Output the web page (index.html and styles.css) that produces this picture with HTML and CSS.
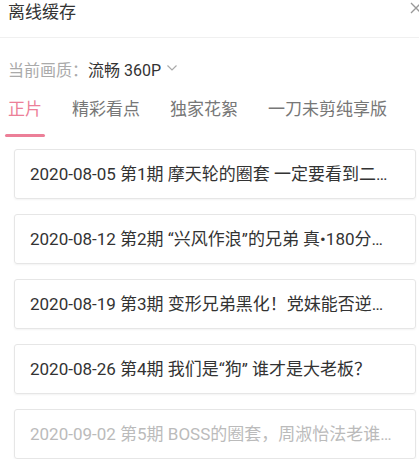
FILE: index.html
```html
<!DOCTYPE html>
<html>
<head>
  <title>离线缓存</title>
  <link rel="stylesheet" href="styles.css">
</head>
<body>
  <div class="panel">
    <div class="header">
      <h2 class="title">离线缓存</h2>
      <svg class="close" width="12" height="12" viewBox="0 0 12 12">
        <path d="M1 1 L11 11 M11 1 L1 11" stroke="#999" stroke-width="1.3" fill="none"/>
      </svg>
    </div>

    <div class="quality">
      <span class="label">当前画质：</span>
      <span class="value">流畅 360P</span>
      <svg class="chevron" width="10" height="6" viewBox="0 0 10 6">
        <path d="M0.5 0.5 L5 5 L9.5 0.5" stroke="#aaa" stroke-width="1.2" fill="none"/>
      </svg>
    </div>

    <div class="tabs">
      <div class="tab active">正片</div>
      <div class="tab">精彩看点</div>
      <div class="tab">独家花絮</div>
      <div class="tab">一刀未剪纯享版</div>
    </div>

    <div class="list">
      <div class="item">2020-08-05 第1期 摩天轮的圈套 一定要看到二十分钟之后</div>
      <div class="item">2020-08-12 第2期 “兴风作浪”的兄弟 真•180分钟完整版</div>
      <div class="item">2020-08-19 第3期 变形兄弟黑化！党妹能否逆袭成功</div>
      <div class="item">2020-08-26 第4期 我们是“狗” 谁才是大老板？</div>
      <div class="item disabled">2020-09-02 第5期 BOSS的圈套，周淑怡法老谁能赢到最后</div>
    </div>
  </div>
</body>
</html>
```

FILE: styles.css
```css
body { margin: 0; background: #fff; font-family: Roboto, "Noto Sans CJK SC", sans-serif; color: #333; overflow: hidden; }
.panel { width: 419px; }

.header { display: flex; justify-content: space-between; align-items: flex-start; height: 37px; border-bottom: 1px solid #f0f0f0; padding-left: 8px; }
.title { margin: 0; font-size: 17px; font-weight: normal; line-height: 24px; color: #333; }
.close { margin-top: 2px; margin-right: -3px; }

.quality { display: flex; align-items: center; height: 22px; margin-top: 20px; padding-left: 8px; font-size: 16px; }
.label { color: #aaa; }
.value { color: #333; }
.chevron { margin-left: 6px; margin-top: -2px; }

.tabs { display: flex; gap: 30px; margin-top: 17px; padding-left: 8px; }
.tab { position: relative; font-size: 17px; line-height: 24px; color: #777; padding-bottom: 16px; }
.tab.active { color: #ec7f98; }
.tab.active::after { content: ""; position: absolute; left: -3px; right: -3px; bottom: 0; height: 3px; background: #ec7f98; border-radius: 2px; }

.list { display: flex; flex-direction: column; gap: 15px; margin-top: 12px; padding-left: 14px; }
.item { width: 402px; height: 50px; box-sizing: border-box; border: 1px solid #e6e6e6; border-radius: 3px; box-shadow: 0 1px 2px rgba(0,0,0,0.05); padding: 0 20px 0 15px; font-size: 17px; line-height: 48px; white-space: nowrap; overflow: hidden; text-overflow: ellipsis; color: #333; }
.item.disabled { color: #bbb; }
```
